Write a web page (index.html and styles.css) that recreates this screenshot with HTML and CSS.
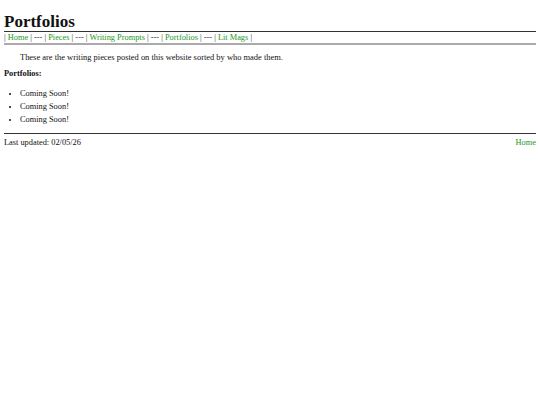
FILE: index.html
```html
<!DOCTYPE html>
<html>
<head>
<meta charset="utf-8">
<title>Portfolios</title>
<link rel="stylesheet" href="styles.css">
</head>
<body>
<header class="top">
  <h1 class="title">Portfolios</h1>
  <nav class="nav">| <a href="#">Home</a> | --- | <a href="#">Pieces</a> | --- | <a href="#">Writing Prompts</a> | --- | <a href="#">Portfolios</a> | --- | <a href="#">Lit Mags</a> |</nav>
</header>
<main class="content">
  <p class="intro">These are the writing pieces posted on this website sorted by who made them.</p>
  <p class="label">Portfolios:</p>
  <ul class="list">
    <li>Coming Soon!</li>
    <li>Coming Soon!</li>
    <li>Coming Soon!</li>
  </ul>
</main>
<footer class="foot">
  <span>Last updated: 02/05/26</span>
  <a href="#">Home</a>
</footer>
</body>
</html>
```
FILE: styles.css
```css
html, body {
  margin: 0;
  padding: 0;
  background: #fff;
}
body {
  padding: 0 4px;
  font-family: "Liberation Serif", "Times New Roman", serif;
  font-size: 8.35px;
  color: #111;
  -webkit-font-smoothing: antialiased;
}
a {
  color: #229922;
  text-decoration: none;
}
.title {
  font-size: 17px;
  font-weight: bold;
  margin: 0;
  padding-top: 12px;
  line-height: 19px;
  border-bottom: 1px solid #333;
}
.nav {
  line-height: 11px;
  border-bottom: 2px solid #aaa;
  color: #333;
}
.content {
  padding-top: 7px;
}
.intro {
  margin: 0;
  padding-left: 16px;
  line-height: 10px;
  font-size: 8.45px;
}
.label {
  margin: 7px 0 0;
  font-weight: bold;
  line-height: 10px;
}
.list {
  margin: 8px 0 0;
  padding-left: 16px;
}
.list li {
  line-height: 13px;
}
.list li::marker {
  font-size: 7px;
}
.foot {
  margin-top: 7px;
  padding-top: 2px;
  border-top: 1px solid #333;
  display: flex;
  justify-content: space-between;
  line-height: 13px;
}
```
